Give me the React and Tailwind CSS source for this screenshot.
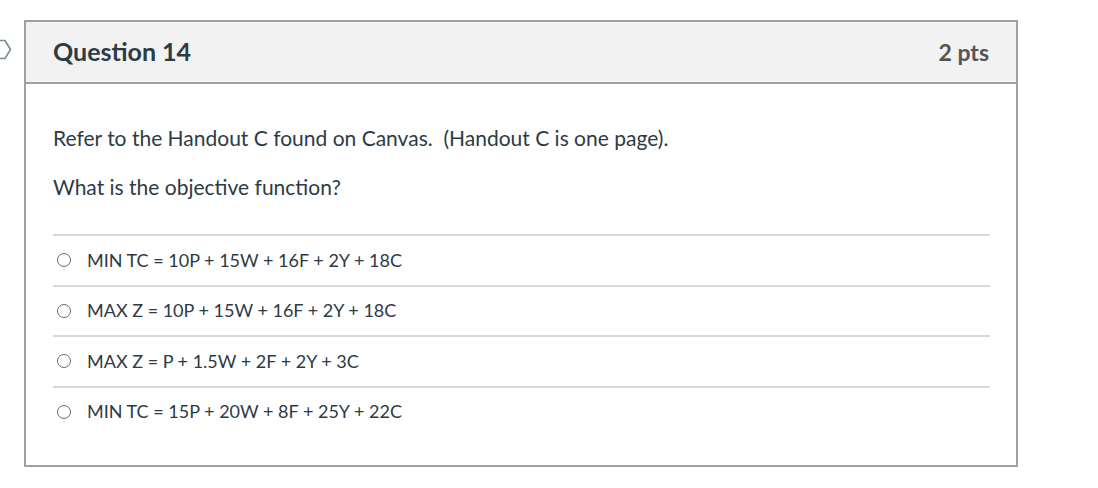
const answers = [
  "MIN TC = 10P + 15W + 16F + 2Y + 18C",
  "MAX Z = 10P + 15W + 16F + 2Y + 18C",
  "MAX Z = P + 1.5W + 2F + 2Y + 3C",
  "MIN TC = 15P + 20W + 8F + 25Y + 22C",
];

export default function App() {
  return (
    <div className="relative w-[1098px] h-[488px] bg-white font-['Lato',sans-serif] text-[#2d3b45]">
      {/* flag marker peeking from the left */}
      <svg className="absolute left-0 top-[39px]" width="14" height="22" viewBox="0 0 14 22">
        <path d="M-2 1.5 H5 L10.5 10.5 L5 19.5 H-2" fill="none" stroke="#7b8d99" strokeWidth="1.6" strokeLinejoin="round" />
      </svg>

      <div className="pt-[20px] pl-[24px]">
        <div className="w-[994px] border-2 border-[#a0a0a0]">
          {/* ── header ── */}
          <div className="h-[62px] bg-[#f2f2f2] border-b-2 border-[#a0a0a0] flex items-center justify-between pl-[27px] pr-[27px]">
            <span className="text-[25px] font-bold text-[#2d3b45]">Question 14</span>
            <span className="text-[23px] font-bold text-[#555]">2 pts</span>
          </div>

          {/* ── body ── */}
          <div className="pl-[27px] pr-[26px] pt-[40px] pb-[29px]">
            <p className="text-[21px] leading-[28px]">
              Refer to the Handout C found on Canvas.&nbsp; (Handout C is one page).
            </p>
            <p className="text-[21px] leading-[28px] mt-[21px]">What is the objective function?</p>

            <div className="mt-[33px]">
              {answers.map((a) => (
                <div key={a} className="border-t-2 border-[#d9d9d9] h-[50.5px] flex items-center">
                  <span className="ml-[4px] w-[14px] h-[14px] rounded-full border-[1.5px] border-[#6a6a6a]" />
                  <span className="ml-[16px] text-[18px] text-[#2d3b45]">{a}</span>
                </div>
              ))}
            </div>
          </div>
        </div>
      </div>
    </div>
  );
}
